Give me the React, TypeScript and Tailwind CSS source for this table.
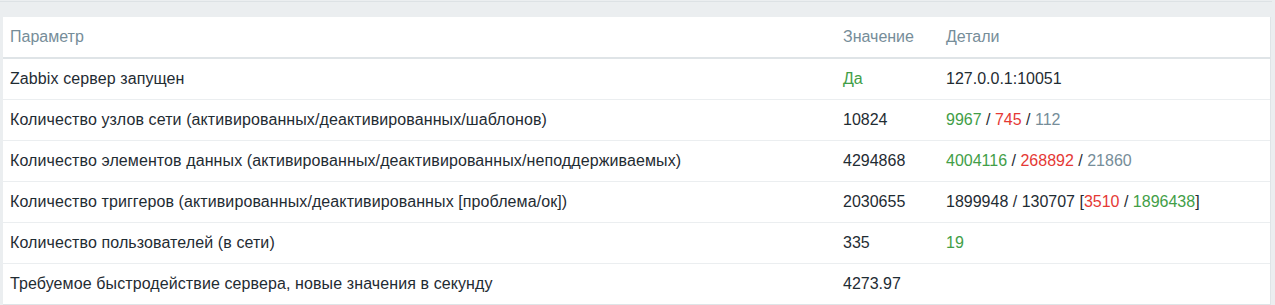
export default function App() {
  const rows: { p: string; v: React.ReactNode; d: React.ReactNode }[] = [
    { p: "Zabbix сервер запущен", v: <span className="text-[#429e47]">Да</span>, d: "127.0.0.1:10051" },
    {
      p: "Количество узлов сети (активированных/деактивированных/шаблонов)",
      v: "10824",
      d: (
        <>
          <span className="text-[#429e47]">9967</span> / <span className="text-[#e53935]">745</span> /{" "}
          <span className="text-[#768d99]">112</span>
        </>
      ),
    },
    {
      p: "Количество элементов данных (активированных/деактивированных/неподдерживаемых)",
      v: "4294868",
      d: (
        <>
          <span className="text-[#429e47]">4004116</span> / <span className="text-[#e53935]">268892</span> /{" "}
          <span className="text-[#768d99]">21860</span>
        </>
      ),
    },
    {
      p: "Количество триггеров (активированных/деактивированных [проблема/ок])",
      v: "2030655",
      d: (
        <>
          1899948 / 130707 [<span className="text-[#e53935]">3510</span> /{" "}
          <span className="text-[#429e47]">1896438</span>]
        </>
      ),
    },
    { p: "Количество пользователей (в сети)", v: "335", d: <span className="text-[#429e47]">19</span> },
    { p: "Требуемое быстродействие сервера, новые значения в секунду", v: "4273.97", d: "" },
  ];
  return (
    <div className="w-[1275px] h-[305px] bg-[#ebeef0] font-['Liberation_Sans',Arial,sans-serif] text-[16px] text-[#1f2c33] overflow-hidden">
      <div className="h-[2px] border-b border-[#dde2e5] mr-[3px]" />
      <div className="pt-[15px] pl-[3px] pr-[4px]">
        <div className="bg-white border-r border-b border-[#dfe4e7]">
          <table className="w-full table-fixed border-collapse">
            <colgroup>
              <col className="w-[833px]" />
              <col className="w-[103px]" />
              <col />
            </colgroup>
            <thead>
              <tr className="h-[41px] border-b-2 border-[#dfe4e7] text-[#768d99]">
                <th className="text-left font-normal pl-[7px]">Параметр</th>
                <th className="text-left font-normal pl-[7px]">Значение</th>
                <th className="text-left font-normal pl-[7px]">Детали</th>
              </tr>
            </thead>
            <tbody>
              {rows.map((r, i) => (
                <tr key={i} className={"h-[41px] " + (i < rows.length - 1 ? "border-b border-[#ebeef0]" : "")}>
                  <td className="pl-[7px] whitespace-nowrap tracking-[0.1px]">{r.p}</td>
                  <td className="pl-[7px] whitespace-nowrap">{r.v}</td>
                  <td className="pl-[7px] whitespace-nowrap">{r.d}</td>
                </tr>
              ))}
            </tbody>
          </table>
        </div>
      </div>
    </div>
  );
}
